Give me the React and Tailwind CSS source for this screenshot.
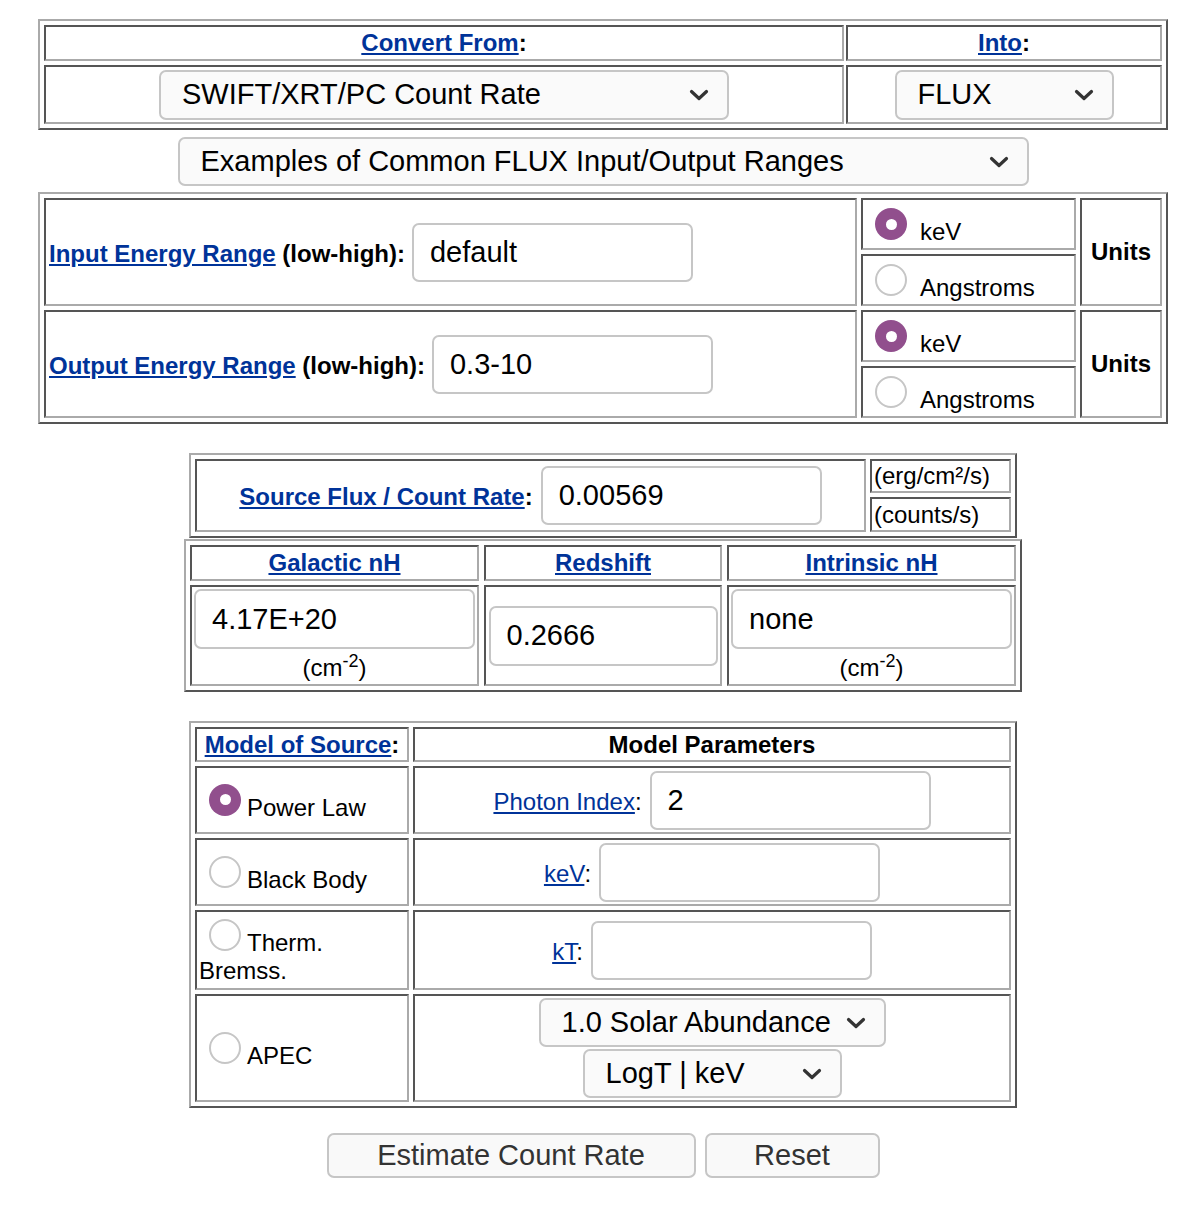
import React from 'react';

const outer = 'border-2 border-t-[#aaaaaa] border-l-[#aaaaaa] border-b-[#555555] border-r-[#555555] grid';
const cell = 'border-2 border-t-[#555555] border-l-[#555555] border-b-[#aaaaaa] border-r-[#aaaaaa]';
const link = 'text-[#003399] underline';

function Chevron() {
  return (
    <svg width="20" height="12" viewBox="0 0 20 12" className="shrink-0">
      <path d="M2.5 2.5 L10 9.5 L17.5 2.5" fill="none" stroke="#333333" strokeWidth="3.2" strokeLinecap="round" strokeLinejoin="round" />
    </svg>
  );
}

function Select({ children, className }) {
  return (
    <div className={`flex items-center justify-between border-2 border-[#c6c6c6] rounded-[7px] bg-[#fafafa] pl-[21px] pr-[18px] text-[29px] whitespace-nowrap ${className}`}>
      <span>{children}</span>
      <Chevron />
    </div>
  );
}

function Input({ children, className }) {
  return (
    <div className={`flex items-center border-2 border-[#c6c6c6] rounded-[7px] bg-white pl-[16px] text-[29px] font-normal text-black ${className}`}>
      {children || '\u00a0'}
    </div>
  );
}

function Radio({ checked, className }) {
  if (checked) {
    return (
      <span className={`relative inline-block w-[32px] h-[32px] rounded-full bg-[#914f8d] align-baseline ${className}`}>
        <span className="absolute left-[10.5px] top-[10.5px] w-[11px] h-[11px] rounded-full bg-white" />
      </span>
    );
  }
  return <span className={`inline-block w-[32px] h-[32px] rounded-full border-2 border-[#c6c6c6] bg-white align-baseline ${className}`} />;
}

function Cm2() {
  return (
    <span>
      (cm<sup>-2</sup>)
    </span>
  );
}

export default function App() {
  return (
    <div className="min-h-[1230px] bg-white text-black leading-[normal] font-['Liberation_Sans',Arial,sans-serif]">
      <div className="w-[1130px] ml-[38px] pt-[19px] pb-[40px] flex flex-col items-center">
        {/* convert from / into */}
        <div className={`${outer} w-[1130px] grid-cols-[800px_316px] grid-rows-[36px_59px] p-[4px] gap-x-[2px] gap-y-[4px]`}>
          <div className={`${cell} flex items-center justify-center text-[24px] font-bold`}>
            <span><a className={link}>Convert From</a>:</span>
          </div>
          <div className={`${cell} flex items-center justify-center text-[24px] font-bold`}>
            <span><a className={link}>Into</a>:</span>
          </div>
          <div className={`${cell} flex items-center justify-center`}>
            <Select className="w-[570px] h-[50px]">SWIFT/XRT/PC Count Rate</Select>
          </div>
          <div className={`${cell} flex items-center justify-center`}>
            <Select className="w-[219px] h-[50px]">FLUX</Select>
          </div>
        </div>

        <Select className="mt-[7px] w-[851px] h-[49px]">Examples of Common FLUX Input/Output Ranges</Select>

        {/* energy ranges */}
        <div className={`${outer} mt-[6px] w-[1130px] grid-cols-[813px_215px_82px] grid-rows-[52px_52px_52px_52px] p-[4px] gap-[4px]`}>
          {[
            ['Input Energy Range', 'default', 'w-[281px]'],
            ['Output Energy Range', '0.3-10', 'w-[281px]'],
          ].map(([label, value, w]) => (
            <React.Fragment key={label}>
              <div className={`${cell} row-span-2 flex items-center px-[3px]`}>
                <div className="flex items-baseline text-[24px] font-bold whitespace-nowrap">
                  <span><a className={link}>{label}</a> (low-high):</span>
                  <Input className={`ml-[7px] h-[59px] ${w}`}>{value}</Input>
                </div>
              </div>
              <div className={`${cell} pl-[3px] pt-[3px] text-[24px] whitespace-nowrap`}>
                <Radio checked className="ml-[9px] mr-[13px] mt-[5px]" />keV
              </div>
              <div className={`${cell} row-span-2 flex items-center justify-center text-[24px] font-bold`}>Units</div>
              <div className={`${cell} pl-[3px] pt-[3px] text-[24px] whitespace-nowrap`}>
                <Radio className="ml-[9px] mr-[13px] mt-[5px]" />Angstroms
              </div>
            </React.Fragment>
          ))}
        </div>

        {/* source flux */}
        <div className={`${outer} mt-[29px] w-[828px] grid-cols-[671px_141px] grid-rows-[34px_35px] p-[4px] gap-[4px]`}>
          <div className={`${cell} row-span-2 flex items-center justify-center`}>
            <div className="flex items-baseline text-[24px] font-bold whitespace-nowrap">
              <span><a className={link}>Source Flux / Count Rate</a>:</span>
              <Input className="ml-[8px] w-[281px] h-[59px]">0.00569</Input>
            </div>
          </div>
          <div className={`${cell} flex items-center pl-[2px] text-[24px] whitespace-nowrap`}>(erg/cm²/s)</div>
          <div className={`${cell} flex items-center pl-[2px] text-[24px] whitespace-nowrap`}>(counts/s)</div>
        </div>

        {/* nH / redshift */}
        <div className={`${outer} mt-[1px] w-[838px] grid-cols-[289px_238px_289px] grid-rows-[36px_101px] p-[4px] gap-x-[5px] gap-y-[4px]`}>
          {['Galactic nH', 'Redshift', 'Intrinsic nH'].map((t) => (
            <div key={t} className={`${cell} flex items-center justify-center text-[24px] font-bold`}>
              <a className={link}>{t}</a>
            </div>
          ))}
          <div className={`${cell} p-[2px] flex flex-col items-center`}>
            <Input className="w-[281px] h-[60px]">4.17E+20</Input>
            <div className="mt-[5px] text-[24px]"><Cm2 /></div>
          </div>
          <div className={`${cell} flex items-center justify-center`}>
            <Input className="w-[229px] h-[60px]">0.2666</Input>
          </div>
          <div className={`${cell} p-[2px] flex flex-col items-center`}>
            <Input className="w-[281px] h-[60px]">none</Input>
            <div className="mt-[5px] text-[24px]"><Cm2 /></div>
          </div>
        </div>

        {/* model */}
        <div className={`${outer} mt-[29px] w-[828px] grid-cols-[214px_598px] grid-rows-[35px_68px_68px_80px_108px] p-[4px] gap-[4px]`}>
          <div className={`${cell} flex items-center justify-center text-[24px] font-bold whitespace-nowrap`}>
            <span><a className={link}>Model of Source</a>:</span>
          </div>
          <div className={`${cell} flex items-center justify-center text-[24px] font-bold`}>Model Parameters</div>

          <div className={`${cell} flex items-center px-[2px] text-[24px]`}>
            <div><Radio checked className="ml-[10px] mr-[6px] mt-[5px]" />Power Law</div>
          </div>
          <div className={`${cell} flex items-center justify-center`}>
            <div className="flex items-baseline text-[24px] whitespace-nowrap">
              <span><a className={link}>Photon Index</a>:</span>
              <Input className="ml-[8px] w-[281px] h-[59px]">2</Input>
            </div>
          </div>

          <div className={`${cell} flex items-center px-[2px] text-[24px]`}>
            <div><Radio className="ml-[10px] mr-[6px] mt-[5px]" />Black Body</div>
          </div>
          <div className={`${cell} flex items-center justify-center`}>
            <div className="flex items-baseline text-[24px] whitespace-nowrap">
              <span><a className={link}>keV</a>:</span>
              <Input className="ml-[8px] w-[281px] h-[59px]" />
            </div>
          </div>

          <div className={`${cell} px-[2px] pt-[2px] text-[24px]`}>
            <div><Radio className="ml-[10px] mr-[6px] mt-[5px]" />Therm. Bremss.</div>
          </div>
          <div className={`${cell} flex items-center justify-center`}>
            <div className="flex items-baseline text-[24px] whitespace-nowrap">
              <span><a className={link}>kT</a>:</span>
              <Input className="ml-[8px] w-[281px] h-[59px]" />
            </div>
          </div>

          <div className={`${cell} flex items-center px-[2px] text-[24px]`}>
            <div><Radio className="ml-[10px] mr-[6px] mt-[5px]" />APEC</div>
          </div>
          <div className={`${cell} flex flex-col items-center justify-center gap-[2px]`}>
            <Select className="w-[347px] h-[49px]">1.0 Solar Abundance</Select>
            <Select className="w-[259px] h-[49px]">LogT | keV</Select>
          </div>
        </div>

        <div className="mt-[25px] flex gap-[9px]">
          <button className="w-[369px] h-[45px] border-2 border-[#c6c6c6] rounded-[7px] bg-[#f9f9f9] text-[29px] text-[#333333]">Estimate Count Rate</button>
          <button className="w-[175px] h-[45px] border-2 border-[#c6c6c6] rounded-[7px] bg-[#f9f9f9] text-[29px] text-[#333333]">Reset</button>
        </div>
      </div>
    </div>
  );
}
